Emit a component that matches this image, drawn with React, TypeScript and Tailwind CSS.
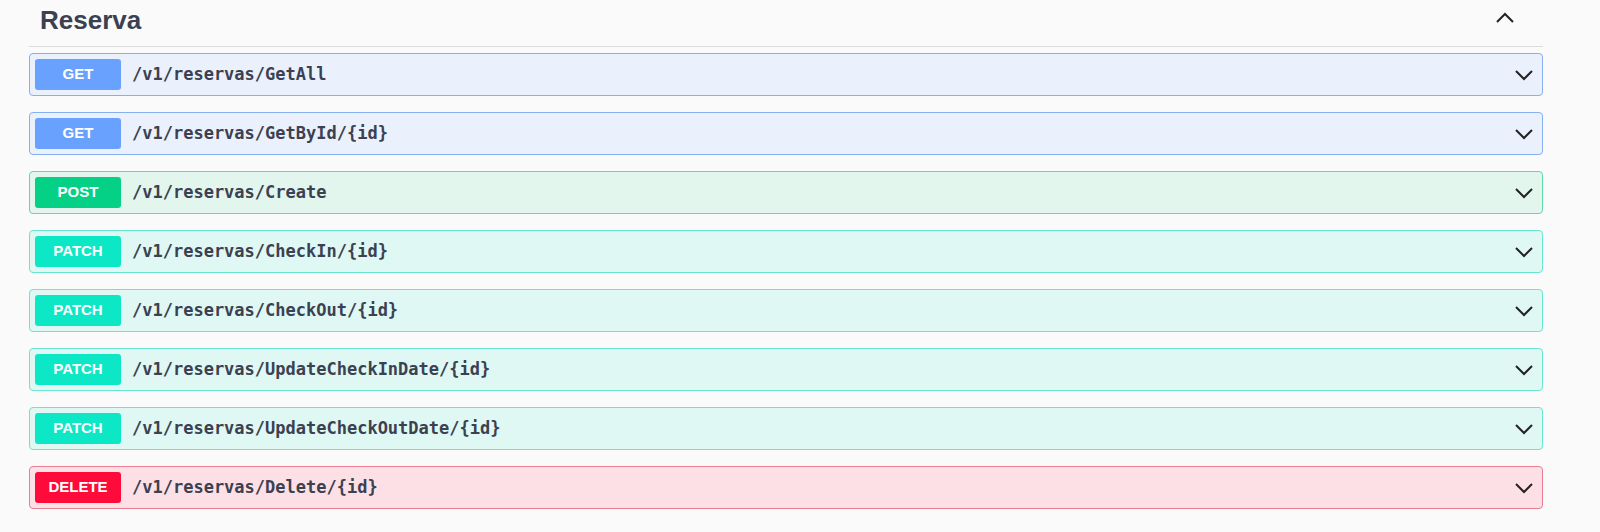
const ops = [
  { method: "GET", path: "/v1/reservas/GetAll" },
  { method: "GET", path: "/v1/reservas/GetById/{id}" },
  { method: "POST", path: "/v1/reservas/Create" },
  { method: "PATCH", path: "/v1/reservas/CheckIn/{id}" },
  { method: "PATCH", path: "/v1/reservas/CheckOut/{id}" },
  { method: "PATCH", path: "/v1/reservas/UpdateCheckInDate/{id}" },
  { method: "PATCH", path: "/v1/reservas/UpdateCheckOutDate/{id}" },
  { method: "DELETE", path: "/v1/reservas/Delete/{id}" },
];

const styles: Record<string, { row: string; badge: string }> = {
  GET: { row: "bg-[#eaf1fc] border-[#86b0f0]", badge: "bg-[#68a2fe]" },
  POST: { row: "bg-[#e2f6ee] border-[#62d8aa]", badge: "bg-[#04d186]" },
  PATCH: { row: "bg-[#dff8f3] border-[#68e6cf]", badge: "bg-[#0ce7c5]" },
  DELETE: { row: "bg-[#fde0e5] border-[#ea7d8f]", badge: "bg-[#fe0b3c]" },
};

function Chevron({ up = false }: { up?: boolean }) {
  return (
    <svg width="20" height="12" viewBox="0 0 20 12" fill="none">
      <path
        d={up ? "M2 11 L10 3 L18 11" : "M2 2 L10 10 L18 2"}
        stroke="#222"
        strokeWidth="2"
      />
    </svg>
  );
}

function Operation({ method, path }: { method: string; path: string }) {
  const s = styles[method];
  return (
    <div
      className={`flex items-center h-[43px] mb-[16px] border rounded-[4px] pl-[5px] pr-[8px] ${s.row}`}
    >
      <span
        className={`w-[86px] h-[31px] rounded-[3px] flex items-center justify-center text-white font-bold text-[15px] ${s.badge}`}
        style={{ fontFamily: '"Liberation Sans", Arial, sans-serif' }}
      >
        {method}
      </span>
      <span
        className="ml-[11px] flex-1 text-[17px] font-bold text-[#3b4151]"
        style={{ fontFamily: '"DejaVu Sans Mono", monospace' }}
      >
        {path}
      </span>
      <Chevron />
    </div>
  );
}

export default function App() {
  return (
    <main
      className="min-h-[532px] bg-[#fafafa] pl-[29px] pr-[57px]"
      style={{ fontFamily: '"Liberation Sans", Arial, sans-serif' }}
    >
      <div className="flex items-start h-[47px] border-b border-[#dcdcdd] pl-[11px] pr-[28px] pt-[5px]">
        <h3 className="flex-1 text-[26px] leading-[30px] font-bold text-[#3b4151]">
          Reserva
        </h3>
        <div className="pt-[6px]">
          <Chevron up />
        </div>
      </div>
      <div className="pt-[6px]">
        {ops.map((o) => (
          <Operation key={o.path} method={o.method} path={o.path} />
        ))}
      </div>
    </main>
  );
}
